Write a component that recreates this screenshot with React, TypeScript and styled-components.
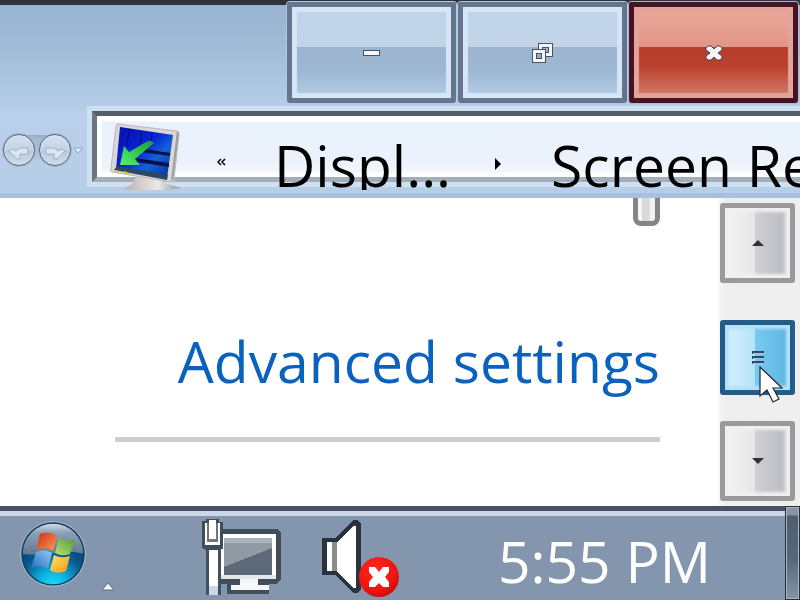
import React from "react";
import styled, { createGlobalStyle, css } from "styled-components";

const GlobalStyle = createGlobalStyle`
  *, *::before, *::after { box-sizing: border-box; }
  body { margin: 0; font-family: "Open Sans", "Noto Sans", sans-serif; background: #fff; }
  button { font: inherit; padding: 0; border: 0; background: none; color: inherit; }
`;

const Screen = styled.div`
  position: relative;
  display: flex;
  flex-direction: column;
  min-height: 100vh;
  overflow: hidden;
`;

/* ---- window frame ---- */

const WindowHeader = styled.header`
  display: flex;
  flex-direction: column;
  height: 198px;
  border-top: 5px solid #2f323a;
  border-bottom: 5px solid #a8c0dc;
  background: linear-gradient(#9ab5d2, #9cb6d3 12%, #b0c9e4 48%, #b9cfea 58%, #b7cee9);
`;

const CaptionButtons = styled.div`
  display: flex;
  justify-content: flex-end;
  gap: 2px;
  margin-top: -3px;
  padding-right: 2px;
`;

const CaptionButton = styled.button<{ $danger?: boolean }>`
  display: flex;
  align-items: center;
  justify-content: center;
  width: 169px;
  height: 101px;
  border: 5px solid #64768d;
  border-radius: 3px;
  box-shadow: inset 0 0 1px 5px #d6e6f6, 0 0 0 1px #b4c9e0;
  background: linear-gradient(#bfd3e8, #c3d4e8 44%, #9cb4cf 44%, #9db6d1 68%, #b3cee8);
  ${(p) =>
    p.$danger &&
    css`
      border-color: #461322;
      box-shadow: inset 0 0 1px 5px #e3a49b, 0 0 0 1px #b4b9d0;
      background: linear-gradient(#eca99c, #e29587 44%, #b83d2b 44%, #ba412e 66%, #d8816f);
    `}
`;

const NavRow = styled.div`
  display: flex;
  flex: 1;
  align-items: flex-start;
  padding-top: 8px;
`;

const History = styled.div`
  display: flex;
  align-items: center;
  width: 87px;
  height: 78px;
  flex: none;
`;

const HistoryButtons = styled.div`
  display: flex;
  align-items: center;
  gap: 4px;
  height: 34px;
  margin-left: 3px;
  border-radius: 17px;
  background: linear-gradient(transparent 2px, #94a9bf 2px, #a3b8ce 5px, #b0c6df 26px, transparent 27px);
`;

const RoundButton = styled.button`
  display: flex;
  align-items: center;
  justify-content: center;
  width: 32px;
  height: 32px;
  border: 1px solid #56677c;
  border-radius: 50%;
  box-shadow: inset 0 0 0 1px #dce8f4, 0 0 0 1px #a3b6cb;
  background: linear-gradient(#d5e1ee, #c3d3e4 50%, #b4c9df 51%, #cfdeed);
`;

const DropButton = styled.button`
  display: flex;
  margin-left: 2px;
`;

const AddressBar = styled.nav`
  flex: 1;
  min-width: 0;
  height: 71px;
  margin-left: 5px;
  border: solid #545d68;
  border-width: 5px 0 5px 5px;
  border-left-color: #6d757e;
  border-bottom-color: #a3aebb;
  background: linear-gradient(#fff 5px, #eaf2fb 6px, #ebf2fb 42px, #f2f6fc 56px, #fff 57px);
  box-shadow: 0 0 0 5px #cfe0f3, inset 5px 0 0 #fff;
`;

/* The crumb text is taller than the field and runs out over its lower edge. */
const Crumbs = styled.div`
  display: flex;
  align-items: flex-start;
  height: 74px;
  overflow: hidden;
`;

const CrumbIcon = styled.div`
  display: flex;
  flex: none;
  margin: 4px 32px 0 12px;
`;

const Crumb = styled.a`
  flex: none;
  font-size: 57px;
  line-height: 98px;
  white-space: nowrap;
  color: #000;
  text-decoration: none;
`;

const CrumbMark = styled.button<{ $wide?: boolean }>`
  display: flex;
  flex: none;
  margin: ${(p) => (p.$wide ? "42px 49px 0 44px" : "42px 48px 0 0")};
`;

/* ---- page ---- */

const Page = styled.main`
  display: flex;
  flex: 1;
  background: #fff;
`;

const Panel = styled.section`
  display: flex;
  flex: 1;
  flex-direction: column;
  align-items: flex-end;
  padding: 0 58px 0 115px;
`;

const ComboEdge = styled.div`
  width: 27px;
  height: 28px;
  border: 5px solid #858585;
  border-top: 0;
  border-radius: 0 0 8px 8px;
  background: linear-gradient(90deg, #f5f5f5 4px, #d8d8d8 4px, #dcdcdc 12px, #f2f2f2 12px);
`;

const SettingsLink = styled.a`
  margin-top: 92px;
  font-size: 57px;
  line-height: 86px;
  white-space: nowrap;
  color: #0a62be;
  text-decoration: none;
`;

const Rule = styled.hr`
  width: 100%;
  height: 5px;
  margin: 33px 0 0;
  border: 0;
  background: #cdcdcd;
`;

const ScrollBar = styled.aside`
  display: flex;
  flex-direction: column;
  align-items: flex-start;
  width: 82px;
  padding: 5px 0 5px 2px;
  background: linear-gradient(90deg, #f7f7f7, #eee 8px, #efefef);
`;

const ScrollButton = styled.button<{ $thumb?: boolean }>`
  display: flex;
  align-items: center;
  justify-content: center;
  width: 75px;
  height: 80px;
  border: 5px solid #9a9a9a;
  border-radius: 3px;
  box-shadow: inset 0 0 3px 4px #f0f0f2;
  background: linear-gradient(90deg, #f5f5f5, #e6e6e8 46%, #cfcfd4 46%, #bebfc5 86%, #dedee2);
  ${(p) =>
    p.$thumb &&
    css`
      height: 75px;
      margin: 37px 0 auto;
      border-color: #225c8a;
      box-shadow: inset 0 0 3px 4px #b3e2f8;
      background: linear-gradient(90deg, #d8f2fd, #b4e4f9 46%, #79c9ef 46%, #60b9e4 90%);
    `}
`;

/* ---- task bar ---- */

const TaskBar = styled.footer`
  display: flex;
  height: 94px;
  border-top: 5px solid #465360;
  box-shadow: inset 0 5px 0 #cbd7e6;
  background: #8496ad;
`;

const StartButton = styled.button`
  display: flex;
  align-self: flex-start;
  margin: 10px 0 0 20px;
`;

const TrayToggle = styled.button`
  display: flex;
  align-self: flex-end;
  margin: 0 87px 9px 15px;
`;

const TrayIcon = styled.button`
  display: flex;
  align-self: flex-start;
  margin: 7px 40px 0 0;
`;

const Clock = styled.time`
  margin: 14px 74px 0 auto;
  font-size: 57px;
  line-height: 72px;
  white-space: nowrap;
  color: #fff;
`;

const ShowDesktop = styled.button`
  width: 15px;
  height: 94px;
  margin-top: -5px;
  border: 1px solid #252f3a;
  box-shadow: inset 0 0 0 1px #a9b5c2;
  background: linear-gradient(#8994a0 8px, #4e5e70 9px, #566779 55%, #8394a8);
`;

const Pointer = styled.div`
  position: absolute;
  left: calc(100% - 41px);
  top: 366px;
  display: flex;
  pointer-events: none;
`;

const MinimizeIcon = () => (
  <svg width="17" height="6" shapeRendering="crispEdges" aria-hidden="true">
    <path fill="#48515f" d="M0 0h17v6H0z" />
    <path fill="#f4f7fb" d="M1 1h15v4H1z" />
  </svg>
);

const RestoreIcon = () => (
  <svg width="21" height="20" shapeRendering="crispEdges" aria-hidden="true">
    <path fill="#48515f" fillRule="evenodd" d="M6 0h15v14H6zM11 5h5v4h-5z" />
    <path fill="#f4f7fb" fillRule="evenodd" d="M7 1h13v12H7zM10 4h7v6h-7z" />
    <path fill="#48515f" d="M0 6h14v14H0z" />
    <path fill="#f4f7fb" d="M1 7h12v12H1z" />
    <path fill="#48515f" d="M4 10h6v6H4z" />
    <path fill="#a0a8b4" d="M5 11h4v4H5z" />
  </svg>
);

const CloseIcon = () => (
  <svg width="18" height="16" viewBox="0 0 18 16" aria-hidden="true">
    <path
      d="M1 3l2-2h3l3 3 3-3h3l2 2v2l-4 3 4 3v2l-2 2h-3l-3-3-3 3H3l-2-2v-2l4-3-4-3z"
      fill="#f4f5f9"
      stroke="#54414a"
      strokeLinejoin="round"
    />
  </svg>
);

const ArrowIcon = ({ back }: { back?: boolean }) => (
  <svg width="24" height="20" viewBox="0 0 24 20" aria-hidden="true">
    <path
      d={back ? "M2 11l8 8h3v-5h8V8h-8l-4 3-4-2z" : "M22 11l-8 8h-3v-5H3V8h8l4 3 4-2z"}
      fill="#dce6f1"
      stroke="#9cafc4"
    />
  </svg>
);

const DisplayIcon = () => (
  <svg width="76" height="72" viewBox="0 0 76 72" aria-hidden="true">
    <defs>
      <linearGradient id="scr" x1="0" y1="0" x2="1" y2="1">
        <stop offset="0" stopColor="#0610a6" />
        <stop offset=".45" stopColor="#0824d4" />
        <stop offset=".65" stopColor="#1264d8" />
        <stop offset="1" stopColor="#082a9a" />
      </linearGradient>
      <linearGradient id="foot" x1="0" y1="0" x2="1" y2="0">
        <stop offset="0" stopColor="#b7b2b0" />
        <stop offset=".6" stopColor="#eceae8" />
        <stop offset="1" stopColor="#8996a6" />
      </linearGradient>
      <linearGradient id="arr" x1="1" y1="0" x2="0" y2="1">
        <stop offset="0" stopColor="#12a03c" />
        <stop offset="1" stopColor="#55f06c" />
      </linearGradient>
    </defs>
    <path d="M28 55l-5 9-9 5q24 4 44 1l14-2-14-4-8-6z" fill="url(#foot)" />
    <path d="M9 4l59 7q2 1 2 4l-5 44q0 4-3 3L3 52q-2-1-1-4L7 6q0-2 2-2z" fill="#d8d7d6" stroke="#b9b8b8" />
    <path d="M68 11l2 1-6 48-2 1z" fill="#a09a9a" />
    <path d="M11 7l53 8-6 43-51-9z" fill="url(#scr)" />
    <path d="M20 9l-2 17M33 11l-2 16M43 12l-1 14" stroke="#050c78" strokeWidth="1" />
    <path d="M36 29l25 4v3l-28-4zM26 38l34 5v4l-38-6z" fill="#05104a" />
    <path d="M8 46l51 9-1 5-53-10z" fill="#2b4960" />
    <path d="M15 52l5 2M6 51l4 1" stroke="#d9c03a" strokeWidth="2" />
    <path d="M42 21l3 2-19 16 5 6-20 0 4-19 5 6 19-11z" fill="url(#arr)" />
  </svg>
);

const StartOrb = () => (
  <svg width="66" height="66" viewBox="0 0 66 66" aria-hidden="true">
    <defs>
      <radialGradient id="orb" cx=".5" cy="1" r=".85">
        <stop offset="0" stopColor="#19e0ff" />
        <stop offset=".28" stopColor="#0db0dd" />
        <stop offset=".6" stopColor="#09598f" />
        <stop offset="1" stopColor="#083660" />
      </radialGradient>
      <linearGradient id="gloss" x1="0" y1="0" x2="0" y2="1">
        <stop offset="0" stopColor="#d5e0e8" />
        <stop offset=".3" stopColor="#8da2b4" />
        <stop offset="1" stopColor="#5d7890" />
      </linearGradient>
      <linearGradient id="red" x1="0" y1="0" x2="1" y2="1">
        <stop offset="0" stopColor="#cc2c12" />
        <stop offset="1" stopColor="#ff9d5a" />
      </linearGradient>
      <linearGradient id="green" x1="1" y1="0" x2="0" y2="1">
        <stop offset="0" stopColor="#4c9a2c" />
        <stop offset="1" stopColor="#bfe07a" />
      </linearGradient>
      <linearGradient id="blue" x1="0" y1="1" x2="1" y2="0">
        <stop offset="0" stopColor="#2668b8" />
        <stop offset="1" stopColor="#8fd0fa" />
      </linearGradient>
      <linearGradient id="yellow" x1="1" y1="1" x2="0" y2="0">
        <stop offset="0" stopColor="#f29a12" />
        <stop offset="1" stopColor="#ffe46a" />
      </linearGradient>
    </defs>
    <circle cx="33" cy="33" r="32" fill="url(#orb)" />
    <path d="M2 33a31 31 0 0 1 62 0q-14-4-29-1T2 33z" fill="url(#gloss)" />
    <circle cx="33" cy="33" r="31" fill="none" stroke="#123e60" strokeWidth="1.5" />
    <circle cx="33" cy="33" r="32.3" fill="none" stroke="#b3cde0" strokeWidth=".8" />
    <path d="M20 13q8-4 17 2l-4 15q-8-5-17-1z" fill="url(#red)" />
    <path d="M39 17q7 5 16 2l-5 14q-8 3-15-1z" fill="url(#green)" />
    <path d="M16 31q9-4 16 1l-4 16q-8-5-17-1z" fill="url(#blue)" />
    <path d="M34 34q7 4 16 1l-4 15q-9 4-16-1z" fill="url(#yellow)" />
  </svg>
);

const NetworkIcon = () => (
  <svg width="80" height="78" viewBox="0 0 80 78" shapeRendering="crispEdges" aria-hidden="true">
    <path fill="#414d59" d="M18 11h57l4 4v46l-5 5h-7v10H25V66H14V16z" />
    <path fill="#fff" d="M18 16h56v45H18z" />
    <path fill="#6b7784" d="M22 20h48v37H22z" />
    <path fill="#909aa5" d="M22 24h48v6L22 49z" />
    <path fill="#5c6978" d="M22 49l48-19v27H22z" />
    <path fill="#a9b2bb" d="M22 20h48v5H22z" />
    <path fill="#414d59" d="M18 61h51l-2 5H18z" />
    <path fill="#e5e8eb" d="M18 57h56v4H18z" />
    <path fill="#f6f7f8" d="M38 61h18v6h11v5H29v-5h9z" />
    <path fill="#44505d" d="M4 28h15v49H4z" />
    <path fill="#fff" d="M7 30h9v47H7z" />
    <path fill="#c8daea" d="M7 68h9v9H7z" />
    <path fill="#414d59" d="M4 1h13v3h4v27l-4 1H4l-4-2V3h4z" />
    <path fill="#fff" d="M3 5h15v22H3z" />
    <path fill="#6c7580" d="M5 5h11v19H5z" />
    <path fill="#fff" d="M7 2h7v19H7z" />
  </svg>
);

const VolumeIcon = () => (
  <svg width="78" height="80" viewBox="0 0 78 80" aria-hidden="true">
    <defs>
      <radialGradient id="mute" cx=".4" cy=".3" r=".8">
        <stop offset="0" stopColor="#ff2a1a" />
        <stop offset=".7" stopColor="#ee1111" />
        <stop offset="1" stopColor="#b80808" />
      </radialGradient>
    </defs>
    <g shapeRendering="crispEdges">
      <path fill="#28333e" d="M0 20h14L31 2h4l4 3v66l-4 4h-4L14 57H0z" />
      <path fill="#fff" d="M5 24h9v29H5zM15 24L31 8h3v62h-3L15 53z" />
      <path fill="#8b8b8b" d="M10 24h5v29h-5z" />
    </g>
    <circle cx="57" cy="59" r="20" fill="url(#mute)" />
    <path
      fill="#fff"
      d="M47 49h6l4 5 4-5h6v5l-4 5 4 5v5h-6l-4-4-4 4h-6v-5l4-5-4-5z"
    />
  </svg>
);

export default function App() {
  return (
    <Screen>
      <GlobalStyle />
      <WindowHeader>
        <CaptionButtons>
          <CaptionButton aria-label="Minimize"><MinimizeIcon /></CaptionButton>
          <CaptionButton aria-label="Restore"><RestoreIcon /></CaptionButton>
          <CaptionButton aria-label="Close" $danger><CloseIcon /></CaptionButton>
        </CaptionButtons>
        <NavRow>
          <History>
            <HistoryButtons>
              <RoundButton aria-label="Back"><ArrowIcon back /></RoundButton>
              <RoundButton aria-label="Forward"><ArrowIcon /></RoundButton>
            </HistoryButtons>
            <DropButton aria-label="Recent pages">
              <svg width="11" height="7" aria-hidden="true">
                <path d="M1 1h9L5 6z" fill="#e3edf7" stroke="#8fa4bb" />
              </svg>
            </DropButton>
          </History>
          <AddressBar aria-label="Address">
            <Crumbs>
              <CrumbIcon><DisplayIcon /></CrumbIcon>
              <CrumbMark aria-label="Previous locations">
                <svg width="9" height="8" aria-hidden="true">
                  <path d="M4 1L1 4l3 3M8 1L5 4l3 3" fill="none" stroke="#000" strokeWidth="1.5" />
                </svg>
              </CrumbMark>
              <Crumb href="#display">Displ...</Crumb>
              <CrumbMark aria-label="Display locations" $wide>
                <svg width="7" height="12" aria-hidden="true">
                  <path d="M0 0l6 6-6 6z" />
                </svg>
              </CrumbMark>
              <Crumb href="#resolution">Screen Resolution</Crumb>
            </Crumbs>
          </AddressBar>
        </NavRow>
      </WindowHeader>

      <Page>
        <Panel>
          <ComboEdge />
          <SettingsLink href="#advanced">Advanced settings</SettingsLink>
          <Rule />
        </Panel>
        <ScrollBar>
          <ScrollButton aria-label="Scroll up">
            <svg width="12" height="7" aria-hidden="true"><path d="M0 6l6-6 6 6z" fill="#333" /></svg>
          </ScrollButton>
          <ScrollButton aria-label="Scroll position" $thumb>
            <svg width="12" height="14" shapeRendering="crispEdges" aria-hidden="true">
              <path d="M0 0h12v3H0zM0 5h12v3H0zM0 10h12v3H0z" fill="#2f4a66" />
              <path d="M1 2h11v1H1zM1 7h11v1H1zM1 12h11v1H1z" fill="#a9c6dc" />
            </svg>
          </ScrollButton>
          <ScrollButton aria-label="Scroll down">
            <svg width="12" height="7" aria-hidden="true"><path d="M0 0h12L6 6z" fill="#333" /></svg>
          </ScrollButton>
        </ScrollBar>
      </Page>

      <TaskBar>
        <StartButton aria-label="Start"><StartOrb /></StartButton>
        <TrayToggle aria-label="Show hidden icons">
          <svg width="14" height="9" aria-hidden="true">
            <path d="M1 8l6-7 6 7z" fill="#f5f8fb" stroke="#5d6c80" />
          </svg>
        </TrayToggle>
        <TrayIcon aria-label="Network"><NetworkIcon /></TrayIcon>
        <TrayIcon aria-label="Volume"><VolumeIcon /></TrayIcon>
        <Clock>5:55 PM</Clock>
        <ShowDesktop aria-label="Show desktop" />
      </TaskBar>

      <Pointer>
        <svg width="26" height="38" viewBox="0 0 26 38" aria-hidden="true">
          <path
            d="M1 1v29l7-6 6 12 6-3-6-11h9z"
            fill="#fff"
            stroke="#1d2632"
            strokeWidth="1.2"
          />
        </svg>
      </Pointer>
    </Screen>
  );
}
